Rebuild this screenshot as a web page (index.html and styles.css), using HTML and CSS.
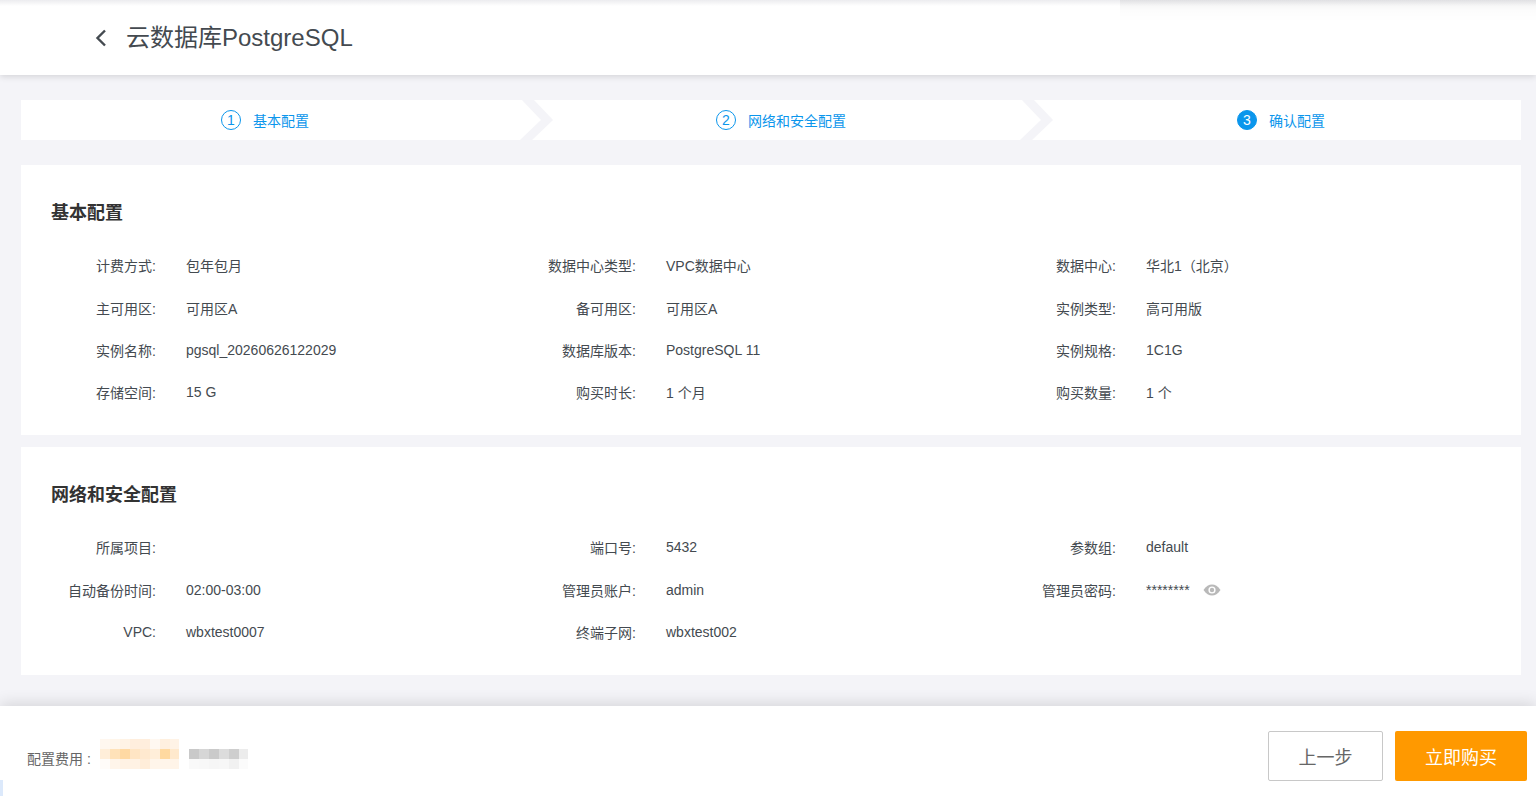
FILE: index.html
```html
<!DOCTYPE html>
<html lang="en">
<head>
    <meta charset="UTF-8">
    <meta name="viewport" content="width=device-width, initial-scale=1.0">
    <title>云数据库PostgreSQL</title>
    <link rel="stylesheet" href="styles.css">
</head>
<body>
    <header class="header">
        <svg class="back" width="14" height="20" viewBox="0 0 14 20">
            <path d="M11 2.5 L3.5 10 L11 17.5" fill="none" stroke="#444a50" stroke-width="2.4"/>
        </svg>
        <h1 class="page-title">云数据库PostgreSQL</h1>
    </header>

    <main class="main">
        <div class="steps">
            <div class="step step-first">
                <span class="step-num">1</span>
                <span>基本配置</span>
                <svg class="chevron" width="33" height="40" viewBox="0 0 33 40">
                    <polygon points="2,0 14,0 33,20 12,40 0,40 21,20" fill="#f4f4f8"/>
                </svg>
            </div>
            <div class="step">
                <span class="step-num">2</span>
                <span>网络和安全配置</span>
                <svg class="chevron" width="33" height="40" viewBox="0 0 33 40">
                    <polygon points="2,0 14,0 33,20 12,40 0,40 21,20" fill="#f4f4f8"/>
                </svg>
            </div>
            <div class="step">
                <span class="step-num step-current">3</span>
                <span>确认配置</span>
            </div>
        </div>

        <section class="card card-basic">
            <h2 class="card-title">基本配置</h2>
            <div class="info-grid">
                <div class="info"><span class="info-label">计费方式:</span><span>包年包月</span></div>
                <div class="info"><span class="info-label">数据中心类型:</span><span>VPC数据中心</span></div>
                <div class="info"><span class="info-label">数据中心:</span><span>华北1（北京）</span></div>
                <div class="info"><span class="info-label">主可用区:</span><span>可用区A</span></div>
                <div class="info"><span class="info-label">备可用区:</span><span>可用区A</span></div>
                <div class="info"><span class="info-label">实例类型:</span><span>高可用版</span></div>
                <div class="info"><span class="info-label">实例名称:</span><span>pgsql_20260626122029</span></div>
                <div class="info"><span class="info-label">数据库版本:</span><span>PostgreSQL 11</span></div>
                <div class="info"><span class="info-label">实例规格:</span><span>1C1G</span></div>
                <div class="info"><span class="info-label">存储空间:</span><span>15 G</span></div>
                <div class="info"><span class="info-label">购买时长:</span><span>1 个月</span></div>
                <div class="info"><span class="info-label">购买数量:</span><span>1 个</span></div>
            </div>
        </section>

        <section class="card card-network">
            <h2 class="card-title">网络和安全配置</h2>
            <div class="info-grid">
                <div class="info"><span class="info-label">所属项目:</span><span></span></div>
                <div class="info"><span class="info-label">端口号:</span><span>5432</span></div>
                <div class="info"><span class="info-label">参数组:</span><span>default</span></div>
                <div class="info"><span class="info-label">自动备份时间:</span><span>02:00-03:00</span></div>
                <div class="info"><span class="info-label">管理员账户:</span><span>admin</span></div>
                <div class="info">
                    <span class="info-label">管理员密码:</span><span>********</span>
                    <svg class="eye" width="18" height="12" viewBox="0 0 18 12">
                        <path d="M0.5 6 C3 2 6 0.5 9 0.5 C12 0.5 15 2 17.5 6 C15 10 12 11.5 9 11.5 C6 11.5 3 10 0.5 6 Z" fill="#b9b9b9"/>
                        <circle cx="9" cy="6" r="3.6" fill="#fff"/>
                        <circle cx="9" cy="6" r="2.2" fill="#b9b9b9"/>
                    </svg>
                </div>
                <div class="info"><span class="info-label">VPC:</span><span>wbxtest0007</span></div>
                <div class="info"><span class="info-label">终端子网:</span><span>wbxtest002</span></div>
            </div>
        </section>
    </main>

    <footer class="footer">
        <div class="price">
            <span class="price-label">配置费用 :</span>
            <svg class="mosaic" width="148" height="30" viewBox="0 0 148 30" shape-rendering="crispEdges">
                <g id="mosaic-orange">
                    <rect x="0" y="0" width="10" height="10" fill="#fff7ef"/>
                    <rect x="10" y="0" width="10" height="10" fill="#fff6eb"/>
                    <rect x="20" y="0" width="10" height="10" fill="#fff3e5"/>
                    <rect x="30" y="0" width="10" height="10" fill="#ffeedd"/>
                    <rect x="40" y="0" width="10" height="10" fill="#ffeedd"/>
                    <rect x="50" y="0" width="10" height="10" fill="#fff8f1"/>
                    <rect x="60" y="0" width="10" height="10" fill="#fff0df"/>
                    <rect x="70" y="0" width="9" height="10" fill="#fff3e6"/>
                    <rect x="0" y="10" width="10" height="10" fill="#ffeed9"/>
                    <rect x="10" y="10" width="10" height="10" fill="#ffe2b9"/>
                    <rect x="20" y="10" width="10" height="10" fill="#ffd9a3"/>
                    <rect x="30" y="10" width="10" height="10" fill="#ffe5c4"/>
                    <rect x="40" y="10" width="10" height="10" fill="#ffe9cf"/>
                    <rect x="50" y="10" width="10" height="10" fill="#ffeed9"/>
                    <rect x="60" y="10" width="10" height="10" fill="#ffd9a0"/>
                    <rect x="70" y="10" width="9" height="10" fill="#ffe9cd"/>
                    <rect x="0" y="20" width="10" height="10" fill="#fffcf9"/>
                    <rect x="10" y="20" width="10" height="10" fill="#fff5ea"/>
                    <rect x="20" y="20" width="10" height="10" fill="#fff2e4"/>
                    <rect x="30" y="20" width="10" height="10" fill="#fff2e4"/>
                    <rect x="40" y="20" width="10" height="10" fill="#ffedd9"/>
                    <rect x="50" y="20" width="10" height="10" fill="#fff5ea"/>
                    <rect x="60" y="20" width="10" height="10" fill="#fff5ea"/>
                    <rect x="70" y="20" width="9" height="10" fill="#fff4e8"/>
                </g>
                <g id="mosaic-gray">
                    <rect x="89" y="10" width="10" height="10" fill="#c9c9c9"/>
                    <rect x="99" y="10" width="10" height="10" fill="#d6d6d6"/>
                    <rect x="109" y="10" width="10" height="10" fill="#cacaca"/>
                    <rect x="119" y="10" width="10" height="10" fill="#dcdcdc"/>
                    <rect x="129" y="10" width="10" height="10" fill="#cecece"/>
                    <rect x="139" y="10" width="9" height="10" fill="#ececec"/>
                    <rect x="89" y="20" width="10" height="10" fill="#f9f9f9"/>
                    <rect x="99" y="20" width="10" height="10" fill="#f8f8f8"/>
                    <rect x="109" y="20" width="10" height="10" fill="#f6f6f6"/>
                    <rect x="119" y="20" width="10" height="10" fill="#f7f7f7"/>
                    <rect x="129" y="20" width="10" height="10" fill="#f1f1f1"/>
                    <rect x="139" y="20" width="9" height="10" fill="#fbfbfb"/>
                </g>
            </svg>
        </div>
        <div class="actions">
            <button class="btn btn-prev">上一步</button>
            <button class="btn btn-buy">立即购买</button>
        </div>
        <div class="corner"></div>
    </footer>
</body>
</html>
```

FILE: styles.css
```css
* {
    box-sizing: border-box;
}

body {
    margin: 0;
    height: 100vh;
    overflow: hidden;
    display: flex;
    flex-direction: column;
    background: #f4f4f8;
    color: #444a50;
    font-family: "Liberation Sans", "Noto Sans CJK SC", sans-serif;
    font-size: 14px;
}

/* Header */
.header {
    position: relative;
    height: 75px;
    flex: none;
    display: flex;
    align-items: center;
    padding-left: 94px;
    background: #fff;
    box-shadow: 0 2px 6px rgba(0, 0, 0, 0.12);
    z-index: 1;
}

.header::before {
    content: "";
    position: absolute;
    top: 0;
    left: 0;
    right: 0;
    height: 6px;
    background: linear-gradient(to bottom, #ececef, #fff);
}

.header::after {
    content: "";
    position: absolute;
    top: 0;
    left: 1120px;
    right: 0;
    height: 22px;
    background: linear-gradient(to bottom, rgba(0, 0, 0, 0.05), rgba(0, 0, 0, 0.01) 50%, rgba(0, 0, 0, 0));
}

.back {
    margin-right: 18px;
}

.page-title {
    margin: 0;
    font-size: 24px;
    font-weight: normal;
    line-height: 1;
}

/* Steps */
.main {
    flex: 1;
    padding: 25px 15px 0 21px;
}

.steps {
    display: flex;
    height: 40px;
    background: #fff;
    color: #0b96ec;
}

.step {
    position: relative;
    width: 500px;
    padding-left: 20px;
    display: flex;
    align-items: center;
    justify-content: center;
    gap: 12px;
}

.step-first {
    padding-left: 0;
    padding-right: 12px;
}

.step-num {
    width: 20px;
    height: 20px;
    border: 1px solid #0b96ec;
    border-radius: 50%;
    display: flex;
    align-items: center;
    justify-content: center;
    font-size: 14px;
}

.step-current {
    background: #0b96ec;
    color: #fff;
}

.chevron {
    position: absolute;
    top: 0;
    left: 499px;
    z-index: 1;
}

/* Cards */
.card {
    margin-top: 25px;
    padding: 30px 30px 0;
    background: #fff;
}

.card-basic {
    height: 270px;
}

.card-network {
    height: 228px;
    margin-top: 12px;
}

.card-title {
    margin: 0 0 13px;
    color: #333;
    font-size: 18px;
    font-weight: bold;
    line-height: 36px;
}

.info-grid {
    display: grid;
    grid-template-columns: repeat(3, 480px);
    grid-auto-rows: 42.4px;
    margin-left: -15px;
}

.info {
    display: flex;
    align-items: center;
    gap: 30px;
}

.info-label {
    width: 120px;
    flex: none;
    text-align: right;
}

.eye {
    margin-left: -17px;
}

/* Footer */
.footer {
    position: relative;
    height: 90px;
    flex: none;
    display: flex;
    justify-content: space-between;
    align-items: center;
    padding: 0 9px 0 27px;
    background: #fff;
    box-shadow: 0 -3px 14px rgba(0, 0, 0, 0.12);
}

.price {
    display: flex;
    align-items: center;
    gap: 9px;
    color: #666;
}

.price-label {
    margin-top: 14px;
}

.mosaic {
    display: block;
    margin-top: 6px;
}

.actions {
    display: flex;
    gap: 12px;
    margin-top: 10px;
}

.btn {
    height: 50px;
    border-radius: 2px;
    font-family: inherit;
    font-size: 18px;
    cursor: pointer;
}

.btn-prev {
    width: 115px;
    border: 1px solid #c8c8c8;
    background: #fff;
    color: #666;
}

.btn-buy {
    width: 132px;
    border: none;
    background: #f90;
    color: #fff;
}

.corner {
    position: absolute;
    left: 0;
    bottom: 0;
    width: 3px;
    height: 16px;
    background: #dce9fb;
}
```
